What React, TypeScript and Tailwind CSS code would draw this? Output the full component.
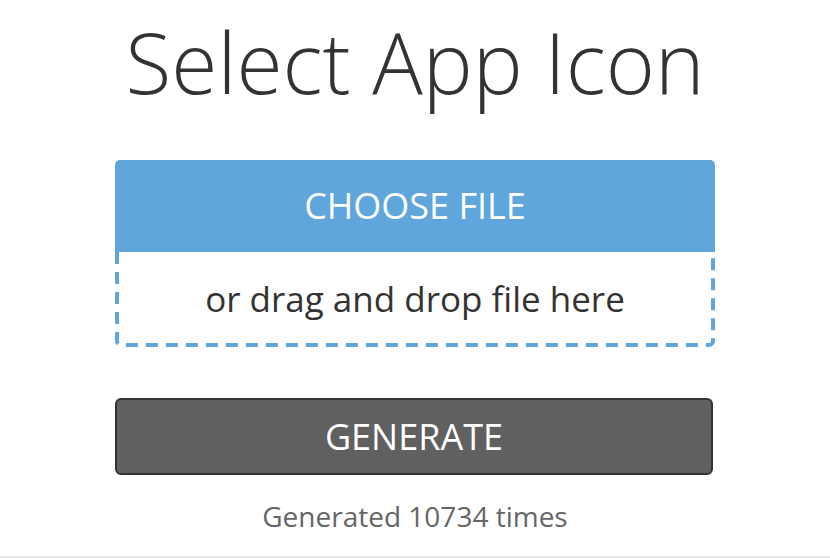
export default function App() {
  return (
    <div className="flex min-h-[558px] flex-col bg-white" style={{ fontFamily: '"Open Sans", sans-serif' }}>
      <div className="flex flex-1 flex-col items-center">
        <h1 className="mt-[2px] h-[120px] text-[84px] leading-[120px] font-light text-[#333333]">
          Select App Icon
        </h1>
        <div className="mt-[38px] flex w-[600px] flex-col">
          <div className="flex h-[92px] items-center justify-center rounded-t-[5px] bg-[#5ea6db] text-[36px] text-white">
            CHOOSE FILE
          </div>
          <div className="relative flex h-[95px] items-center justify-center text-[35px] text-[#333333]">
            <svg className="absolute inset-0" width="600" height="95" viewBox="0 0 600 95" fill="none">
              <path
                d="M2 0 V89 A4 4 0 0 0 6 93 H594 A4 4 0 0 0 598 89 V0"
                stroke="#5ea6db"
                strokeWidth="4"
                strokeDasharray="12 8"
              />
            </svg>
            <span className="relative">or drag and drop file here</span>
          </div>
          <button className="mt-[51px] flex h-[77px] w-[598px] items-center justify-center rounded-[6px] border-2 border-[#333333] bg-[#606060] text-[36px] text-white">
            GENERATE
          </button>
        </div>
        <div className="mt-[20px] text-[28px] text-[#666666]">Generated 10734 times</div>
      </div>
      <div className="h-[2px] bg-[#e6e6e6]" />
    </div>
  );
}
